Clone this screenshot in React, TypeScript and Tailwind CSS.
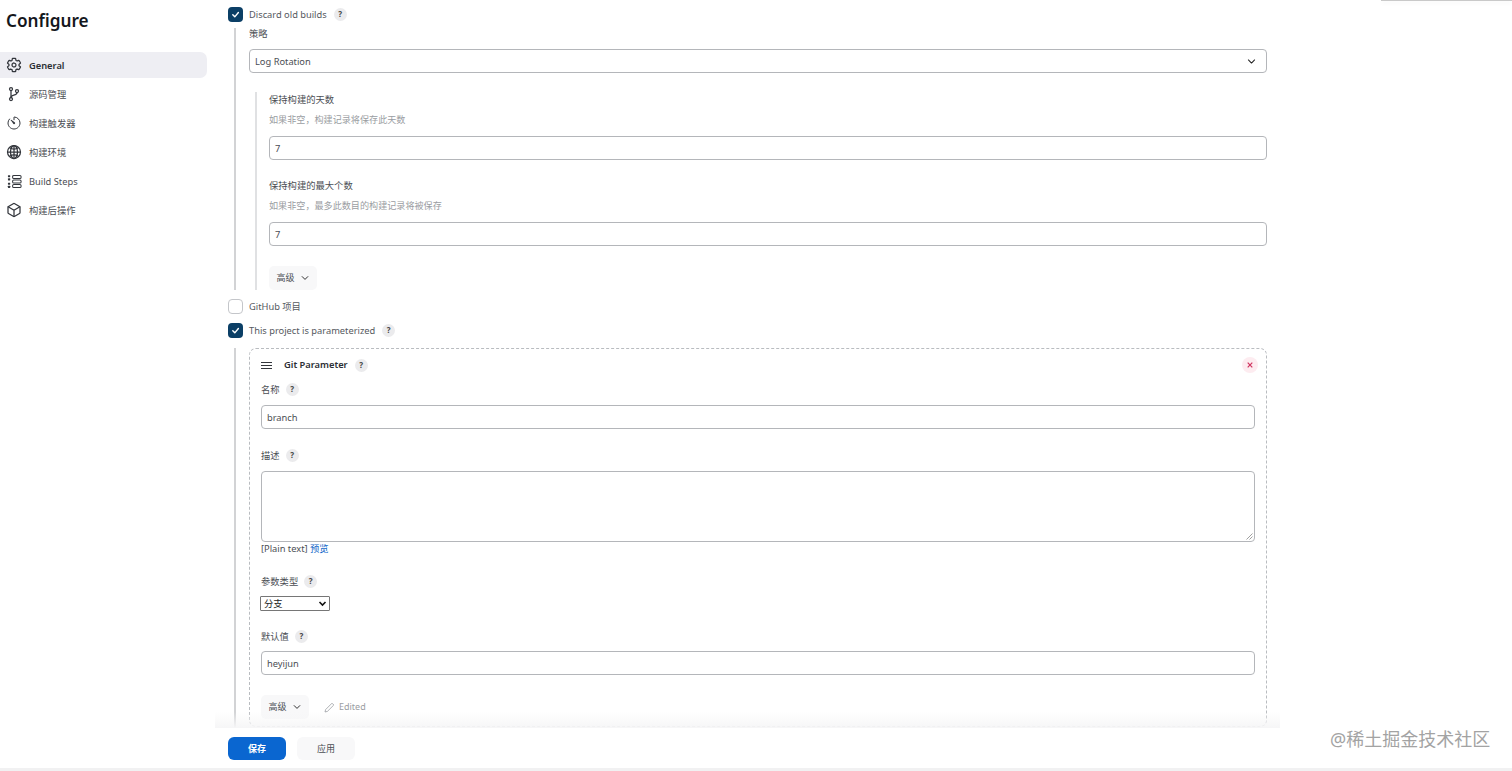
import type { FC, ReactNode } from "react";
import { IoSettingsOutline, IoGitBranchOutline, IoTimerOutline, IoGlobeOutline, IoCubeOutline, IoChevronDown } from "react-icons/io5";

const FONT = "[font-family:'Noto_Sans','Noto_Sans_CJK_SC',sans-serif]";
const HEAVY = "[&_*]:[stroke-width:40px]";

const StepsIcon = () => (
  <svg width="15" height="15" viewBox="0 0 16 16" fill="none" stroke="currentColor" strokeWidth="1.1">
    <rect x="6" y="1.5" width="9" height="3.4" rx="1.2" />
    <rect x="6" y="6.3" width="9" height="3.4" rx="1.2" />
    <rect x="6" y="11.1" width="9" height="3.4" rx="1.2" />
    <g fill="currentColor" stroke="none">
      <rect x="1" y="1.2" width="2.4" height="2.2" rx="0.5" />
      <rect x="1" y="4.6" width="2.4" height="2.2" rx="0.5" />
      <rect x="1" y="9.2" width="2.4" height="2.2" rx="0.5" />
      <rect x="1" y="12.6" width="2.4" height="2.2" rx="0.5" />
    </g>
  </svg>
);

const NAV = [
  { label: "General", icon: <IoSettingsOutline size={16} className={HEAVY} />, active: true },
  { label: "源码管理", icon: <IoGitBranchOutline size={16} className={HEAVY} /> },
  { label: "构建触发器", icon: <IoTimerOutline size={16} /> },
  { label: "构建环境", icon: <IoGlobeOutline size={16} className={HEAVY} /> },
  { label: "Build Steps", icon: <StepsIcon /> },
  { label: "构建后操作", icon: <IoCubeOutline size={16} className={HEAVY} /> },
];

const Help = () => (
  <span className="w-[13px] h-[13px] rounded-full bg-[#ebebed] flex items-center justify-center text-[8px] font-bold text-[#444] leading-none">?</span>
);

const Check: FC<{ checked?: boolean; label: string; help?: boolean }> = ({ checked, label, help }) => (
  <div className="flex items-center h-4">
    {checked ? (
      <span className="w-[15px] h-[15px] rounded-[4px] bg-[#0b3f66] flex items-center justify-center">
        <svg width="9" height="9" viewBox="0 0 10 10" fill="none" stroke="white" strokeWidth="1.6" strokeLinecap="round" strokeLinejoin="round">
          <path d="M2 5.4 4.2 7.6 8.2 2.8" />
        </svg>
      </span>
    ) : (
      <span className="w-[15px] h-[15px] rounded-[4px] border border-[#c4c6ca] bg-white" />
    )}
    <span className="ml-[6px] mr-[7px] h-4 text-[9.3px] leading-[18px] text-[#55585e]">{label}</span>
    {help && <Help />}
  </div>
);

const Label: FC<{ children: ReactNode; help?: boolean }> = ({ children, help }) => (
  <div className="flex items-center gap-[6px] h-[14px] text-[9.3px] text-[#4b4e54]">
    <span className="h-[14px] leading-[16px]">{children}</span>
    {help && <Help />}
  </div>
);

const Input: FC<{ value: string }> = ({ value }) => (
  <div className="h-6 rounded-[4px] border border-[#b4b6ba] bg-white px-[5px] pt-[2px] flex items-center text-[9.3px] text-[#4b4e54]">{value}</div>
);

const Advanced = () => (
  <button className="w-12 h-6 rounded-[5px] bg-[#f8f8f9] flex items-center justify-center gap-[5px] text-[9px] text-[#4b4e54]">
    高级 <IoChevronDown size={10} className="text-[#222]" />
  </button>
);

export default function App() {
  return (
    <div className={`relative h-[771px] w-[1512px] overflow-hidden bg-white flex ${FONT}`}>
      <aside className="w-[228px] shrink-0">
        <h1 className="pl-[6px] pt-[9px] h-[52px] text-[17.2px] leading-6 font-semibold text-[#14171c]">Configure</h1>
        <nav className="flex flex-col w-[207px]">
          {NAV.map((n) => (
            <div
              key={n.label}
              className={`h-[26px] mb-[3px] pl-[6px] flex items-center gap-[7px] rounded-r-[7px] text-[9.3px] ${
                n.active ? "bg-[#eeeef3] font-semibold text-[#2b2e34]" : "text-[#4b4e54]"
              }`}
            >
              <span className="w-[16px] flex justify-center text-[#33363c]">{n.icon}</span>
              <span className="pt-[2px]">{n.label}</span>
            </div>
          ))}
        </nav>
      </aside>

      <main className="w-[1039px] pt-[6px] text-[#4b4e54]">
        <Check checked label="Discard old builds" help />
        <div className="ml-[6px] mt-[6px] border-l-2 border-[#d2d3d5] pl-[13px] h-[262px]">
          <div className="h-[13px] leading-[12px] text-[9.3px]">策略</div>
          <div className="mt-[8px] h-6 rounded-[4px] border border-[#b4b6ba] pl-[5px] pr-[9px] flex items-center justify-between text-[9.3px]">
            <span className="pt-[2px]">Log Rotation</span>
            <IoChevronDown size={11} className="text-[#222]" />
          </div>
          <div className="mt-[19px] ml-[6px] border-l-2 border-[#e0e1e3] pl-[12px] h-[198px]">
            <Label>保持构建的天数</Label>
            <div className="mt-[7px] h-[14px] leading-[14px] text-[9.1px] text-[#9a9da2]">如果非空，构建记录将保存此天数</div>
            <div className="mt-[9px]">
              <Input value="7" />
            </div>
            <div className="mt-[18px]">
              <Label>保持构建的最大个数</Label>
            </div>
            <div className="mt-[7px] h-[14px] leading-[14px] text-[9.1px] text-[#9a9da2]">如果非空，最多此数目的构建记录将被保存</div>
            <div className="mt-[9px]">
              <Input value="7" />
            </div>
            <div className="mt-[20px]">
              <Advanced />
            </div>
          </div>
        </div>

        <div className="mt-[8px]">
          <Check label="GitHub 项目" />
        </div>
        <div className="mt-[8px]">
          <Check checked label="This project is parameterized" help />
        </div>

        <div className="ml-[6px] mt-[10px] border-l-2 border-[#d2d3d5] pl-[13px] h-[400px]">
          <div className="relative h-[379px] rounded-[7px] border border-dashed border-[#b9bcc0] px-[11px] pt-[9px]">
            <div className="flex items-center h-[14px]">
              <svg width="11" height="7" viewBox="0 0 11 7" stroke="#33363c" strokeWidth="1">
                <path d="M0 .5h11M0 3.5h11M0 6.5h11" />
              </svg>
              <span className="ml-3 mr-[7px] text-[9.3px] font-semibold text-[#2b2e34]">Git Parameter</span>
              <Help />
            </div>
            <span className="absolute right-[8px] top-[8px] w-4 h-4 rounded-full bg-[#fdecf0] flex items-center justify-center">
              <svg width="6" height="6" viewBox="0 0 6 6" stroke="#d0335f" strokeWidth="1.2">
                <path d="M.7.7l4.6 4.6M5.3.7.7 5.3" />
              </svg>
            </span>

            <div className="mt-[10px]">
              <Label help>名称</Label>
            </div>
            <div className="mt-[9px]">
              <Input value="branch" />
            </div>
            <div className="mt-[19px]">
              <Label help>描述</Label>
            </div>
            <div className="relative mt-[9px] h-[71px] rounded-[4px] border border-[#b4b6ba]">
              <svg className="absolute right-[1px] bottom-[1px]" width="7" height="7" viewBox="0 0 7 7" stroke="#777" strokeWidth="0.7">
                <path d="M6.5.5l-6 6M6.5 3.5l-3 3" />
              </svg>
            </div>
            <div className="h-[14px] leading-[14px] text-[9.3px] text-[#4b4e54]">
              [Plain text] <span className="text-[#1268c9]">预览</span>
            </div>
            <div className="mt-[18px]">
              <Label help>参数类型</Label>
            </div>
            <div className="mt-[8px] w-[70px] h-[15px] border border-[#767676] rounded-[1px] pl-[3px] pr-[2px] flex items-center justify-between text-[9.3px] text-[#222] -ml-[1px]">
              分支
              <svg width="9" height="9" viewBox="0 0 9 9" fill="none" stroke="#111" strokeWidth="1.6">
                <path d="M1.5 3 4.5 6 7.5 3" />
              </svg>
            </div>
            <div className="mt-[18px]">
              <Label help>默认值</Label>
            </div>
            <div className="mt-[8px]">
              <Input value="heyijun" />
            </div>
            <div className="mt-[20px] flex items-center">
              <Advanced />
              <span className="ml-[15px] flex items-center gap-[4px] text-[9px] text-[#9a9da2]">
                <svg width="11" height="11" viewBox="0 0 11 11" fill="none" stroke="#9a9da2" strokeWidth="0.8" strokeLinejoin="round">
                  <path d="M1 10 1.6 7.6 8 1.2 9.8 3 3.4 9.4Z" />
                </svg>
                Edited
              </span>
            </div>
          </div>
        </div>
      </main>

      <div className="absolute left-[215px] w-[1065px] top-[712px] h-[16px] bg-gradient-to-b from-transparent to-[#f6f6f7]" />
      <div className="absolute left-[215px] w-[1065px] top-[728px] h-[40px] bg-white pl-[13px] pt-[9px] flex gap-[11px]">
        <button className="w-[58px] h-[23px] rounded-[6px] bg-[#0a66d0] text-white text-[9px] font-semibold">保存</button>
        <button className="w-[58px] h-[23px] rounded-[6px] bg-[#f8f8f9] text-[#4b4e54] text-[9px]">应用</button>
      </div>
      <div className="absolute left-0 right-0 top-[768px] h-[3px] bg-[#f1f1f2]" />
      <div className="absolute left-[1381px] right-0 top-0 h-[1px] bg-[#c9c9c9] shadow-[0_2px_4px_rgba(0,0,0,0.08)]" />
      <div className="absolute left-[1330px] top-[727px] text-[18px] leading-[24px] text-[#a3a3a3]">@稀土掘金技术社区</div>
    </div>
  );
}
